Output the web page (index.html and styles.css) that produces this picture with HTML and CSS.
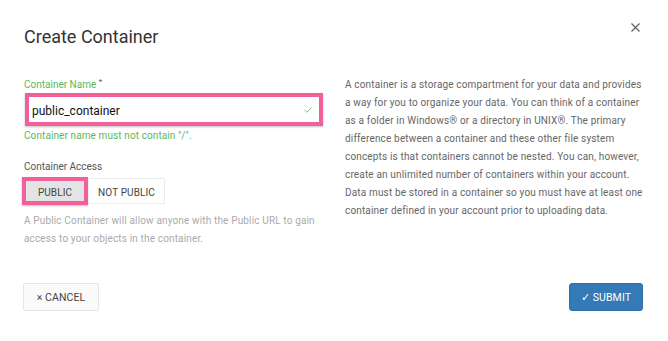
FILE: index.html
```html
<!DOCTYPE html>
<html lang="en">
<head>
<meta charset="utf-8">
<title>Create Container</title>
<link rel="stylesheet" href="styles.css">
</head>
<body>
<div class="dialog">
  <div class="dialog-header">
    <h1 class="dialog-title">Create Container</h1>
    <button class="close-btn" aria-label="Close">
      <svg width="9" height="9" viewBox="0 0 9 9"><path d="M0.5 0.5L8.5 8.5M8.5 0.5L0.5 8.5" stroke="#666" stroke-width="1.3" fill="none"/></svg>
    </button>
  </div>
  <div class="dialog-body">
    <div class="col-left">
      <label class="field-label">Container Name <span class="req">*</span></label>
      <div class="input-box">
        <span class="input-value">public_container</span>
        <svg class="check" width="8" height="6" viewBox="0 0 8 6"><path d="M0.5 3L2.8 5.2L7.5 0.6" stroke="#7bbf7b" stroke-width="1" fill="none"/></svg>
      </div>
      <div class="help-success">Container name must not contain "/".</div>
      <div class="access-label">Container Access</div>
      <div class="btn-group">
        <button class="seg-btn active">PUBLIC</button>
        <button class="seg-btn">NOT PUBLIC</button>
      </div>
      <p class="access-desc">A Public Container will allow anyone with the Public URL to gain access to your objects in the container.</p>
    </div>
    <div class="col-right">
      <p class="info">A container is a storage compartment for your data and provides a way for you to organize your data. You can think of a container as a folder in Windows® or a directory in UNIX®. The primary difference between a container and these other file system concepts is that containers cannot be nested. You can, however, create an unlimited number of containers within your account. Data must be stored in a container so you must have at least one container defined in your account prior to uploading data.</p>
    </div>
  </div>
  <div class="dialog-footer">
    <button class="btn btn-cancel">× CANCEL</button>
    <button class="btn btn-submit">✓ SUBMIT</button>
  </div>
</div>
</body>
</html>
```
FILE: styles.css
```css
* { box-sizing: border-box; }
html, body { margin: 0; padding: 0; background: #fff; }
body { font-family: Roboto, "Noto Sans", "Liberation Sans", sans-serif; color: #333; }

.dialog { width: 668px; padding: 23px 25px 0 24px; }

.dialog-header { display: flex; justify-content: space-between; align-items: flex-start; }
.dialog-title { margin: 3px 0 0 0; font-size: 18px; font-weight: 400; line-height: 21px; color: #333; }
.close-btn { border: 0; background: none; padding: 0; margin: 0 3px 0 0; width: 9px; height: 9px; display: flex; cursor: pointer; }

.dialog-body { display: grid; grid-template-columns: 298px 300px; column-gap: 23px; margin-top: 31px; }

.field-label { display: block; font-size: 10px; line-height: 14px; color: #5cb85c; }
.req { color: #555; font-size: 8px; vertical-align: top; position: relative; top: -3px; }

.input-box {
  margin-top: 1px; margin-left: 1px; width: 298px; height: 33px;
  border: 4px solid #f0609a; background: #fff;
  box-shadow: 0 1px 2px rgba(0,0,0,.25);
  display: flex; align-items: center; justify-content: space-between;
  padding: 3px 7px 0 3px;
}
.input-value { font-size: 12px; line-height: 22px; color: #111; }
.check { margin-top: -2px; }

.help-success { margin-top: 3px; font-size: 10px; line-height: 14px; color: #5cb85c; letter-spacing: 0.1px; }

.access-label { margin-top: 17px; font-size: 10px; line-height: 14px; color: #555; }

.btn-group { display: flex; align-items: center; margin-top: 3px; margin-left: -2px; }
.seg-btn {
  font-family: inherit; font-size: 10px; color: #444; background: #fff; white-space: nowrap;
  border: 1px solid #ebebeb; height: 26px; padding: 2px 0 0; margin: 0; letter-spacing: 0.1px;
}
.seg-btn.active {
  height: 28px; width: 66px;
  background: #e4e4e4; border: 4px solid #f0609a;
  box-shadow: 0 1px 2px rgba(0,0,0,.25);
}
.seg-btn:not(.active) { width: 77px; }

.access-desc { margin: 7px 0 0 0; font-size: 10px; line-height: 18px; color: #aaa; letter-spacing: 0.15px; }

.info { margin: -2px 0 0 0; font-size: 10px; line-height: 18px; color: #666; letter-spacing: 0.16px; }

.dialog-footer { display: flex; justify-content: space-between; margin-top: 35px; }
.btn { font-family: inherit; font-size: 10.5px; height: 28px; border-radius: 2px; padding: 0; margin: 0; cursor: pointer; letter-spacing: 0.1px; }
.btn-cancel { width: 76px; background: #fafafa; border: 1px solid #e6e6e6; color: #444; margin-left: -1px; }
.btn-submit { width: 74px; background: #337ab7; border: 1px solid #2e6da4; color: #fff; border-radius: 3px; }
```
